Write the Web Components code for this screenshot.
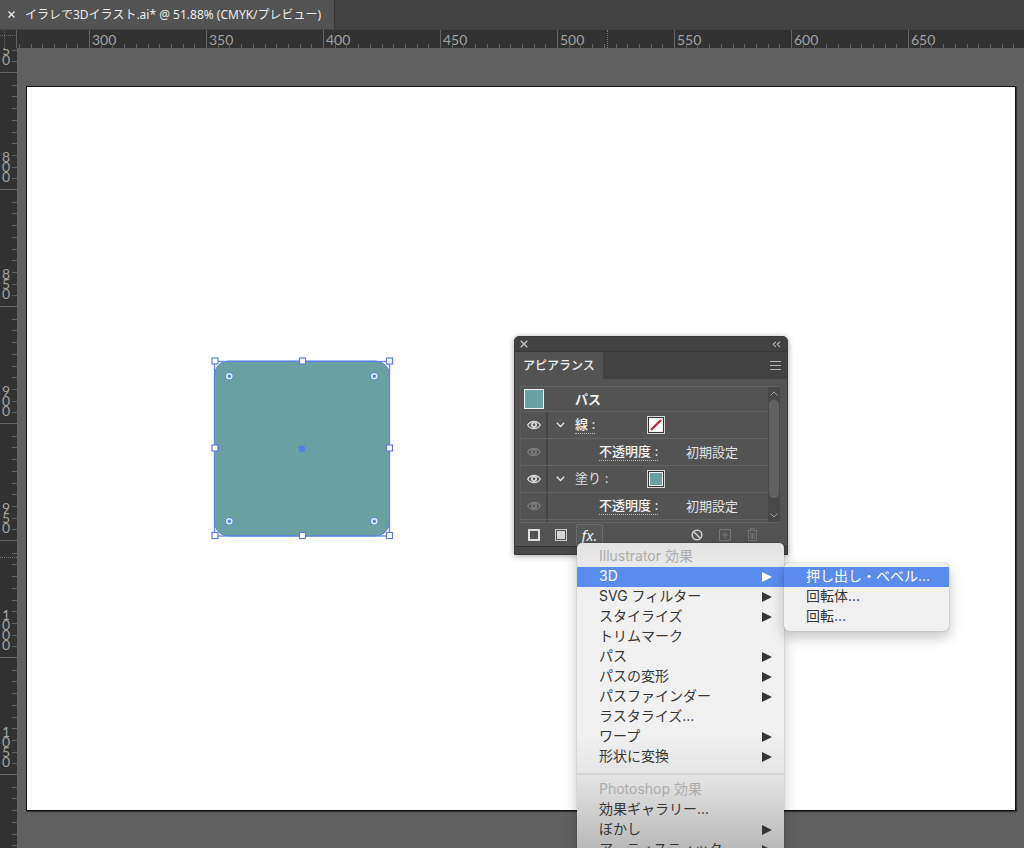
<!DOCTYPE html>
<html lang="ja">
<head>
<meta charset="utf-8">
<title>イラレで3Dイラスト.ai</title>
<style>
  html, body { margin: 0; height: 100%; overflow: hidden; background: #606060; }
  body { font: 13px/20px "Inter", "Noto Sans CJK JP", sans-serif; }
</style>
</head>
<body>
<design-app></design-app>
<script>
const SHEET = `
  * { box-sizing: border-box; }
  button { font: inherit; color: inherit; background: none; border: 0; padding: 0; margin: 0; }
  svg { display: block; }
`;

class BaseElement extends HTMLElement {
  connectedCallback() {
    if (this.shadowRoot) return;
    this.attachShadow({ mode: 'open' }).innerHTML = `<style>${SHEET}${this.styles()}</style>${this.markup()}`;
  }
  styles() { return ''; }
  markup() { return ''; }
}

/* Document tab strip */
customElements.define('document-tabs', class extends BaseElement {
  styles() { return `
    :host { display: flex; height: 30px; background: #424242; }
    .tab { display: flex; align-items: center; gap: 9px; height: 29px; padding: 0 13px 0 7px;
      background: #535353; border-right: 1px solid #383838; color: #ececec; white-space: nowrap;
      font: 12px/20px "Noto Sans", "Noto Sans CJK JP", sans-serif; }
    button { display: flex; width: 9px; height: 9px; align-items: center; justify-content: center; }
  `; }
  markup() { return `
    <div class="tab">
      <button aria-label="閉じる"><svg width="7" height="7" viewBox="0 0 7 7"><path d="M.5 .5l6 6M6.5 .5l-6 6" stroke="#e8e8e8" stroke-width="1.4"/></svg></button>
      <slot></slot>
    </div>`; }
});

/* Ruler: a lead-in segment that ends at the first major tick, then one segment per label */
customElements.define('canvas-ruler', class extends BaseElement {
  get vertical() { return this.getAttribute('axis') === 'y'; }
  styles() {
    const common = `
      :host { display: flex; position: relative; overflow: hidden; background: #323232; color: #a2a2a2;
        font: 14px/10px Lato, sans-serif; }
      .seg { display: flex; position: relative; flex: none; overflow: hidden; }
      svg { position: absolute; }
      .mark { position: absolute; }
    `;
    return common + (this.vertical ? `
      :host { flex-direction: column; width: 17px; }
      .seg { height: 117px; border-bottom: 1px solid #666; flex-direction: column; justify-content: flex-end; padding: 0 0 7px 2px; }
      .seg:first-of-type { height: 25px; }
      svg { right: 0; bottom: -1px; }
      .label { width: 9px; word-break: break-all; }
      .mark { left: 0; top: 509px; width: 17px; border-top: 1px dotted #777; }
    ` : `
      :host { height: 18px; flex: 1; }
      .seg { width: 117px; border-left: 1px solid #666; padding: 5px 0 0 2px; }
      .seg:first-of-type { width: 72px; border-left: 0; }
      svg { right: 0; bottom: 0; }
      .mark { left: 590px; top: 0; height: 18px; border-left: 1px dotted #777; }
    `);
  }
  markup() {
    let d = '';
    for (let i = 1; i < 10; i++) {
      const p = Math.round(i * 11.7) + .5;
      d += this.vertical ? `M0 ${p}h5` : `M${p} 0v4`;
    }
    const ticks = this.vertical
      ? `<svg width="5" height="117"><path d="${d}" stroke="#616161"/></svg>`
      : `<svg width="117" height="4"><path d="${d}" stroke="#616161"/></svg>`;
    const labels = this.getAttribute('labels').split(',');
    return labels.map(t => `<div class="seg"><div class="label">${t}</div>${ticks}</div>`).join('') + '<i class="mark"></i>';
  }
});

/* Rounded square with its bounding box and corner widgets */
customElements.define('selected-shape', class extends BaseElement {
  styles() { return ':host { display: block; }'; }
  markup() {
    const handles = [[5,5],[92.5,5],[179.5,5],[5,92],[179.5,92],[5,179.5],[92.5,179.5],[179.5,179.5]]
      .map(([x, y]) => `<rect x="${x - 3}" y="${y - 3}" width="6" height="6" fill="#fff" stroke="#5b7fe0" stroke-width="1.2"/>`).join('');
    const widgets = [[19.3,20.3],[164.3,20.3],[19.3,165.3],[164.3,165.3]]
      .map(([x, y]) => `<circle cx="${x}" cy="${y}" r="4" fill="#4f80e6"/><circle cx="${x}" cy="${y}" r="2.5" fill="none" stroke="#e2f0ff" stroke-width="1.6"/>`).join('');
    return `<svg width="185" height="185" viewBox="0 0 185 185">
      <rect x="4.5" y="5" width="175" height="175" rx="14" fill="#6ba0a2" stroke="#5c82dc" stroke-width="1"/>
      <rect x="4.5" y="5.5" width="175" height="174.5" fill="none" stroke="#5b86ea" stroke-width="1.3"/>
      ${handles}${widgets}<circle cx="91.8" cy="92.8" r="3.4" fill="#4f80ec"/></svg>`;
  }
});

/* One line of the appearance list */
customElements.define('appearance-row', class extends BaseElement {
  styles() { return `
    :host { display: flex; height: 27px; border-bottom: 1px solid #636363; }
    .eye { width: 27px; flex: none; border-right: 2px solid #454545; display: flex; align-items: center; justify-content: center; color: #d6d6d6; }
    :host([dim]) .eye { color: #7b7b7b; }
    .body { flex: 1; display: flex; align-items: center; }
    .fold { width: 24px; margin-right: 3px; display: flex; justify-content: center; }
    .name { width: 72px; display: flex; }
    :host([dim]) .body { padding-left: 51px; }
    :host([dim]) .name { width: 87px; }
    .name button { display: block; line-height: 17px; white-space: nowrap; color: #f4f4f4; font-weight: 500; }
    .link { border-bottom: 1px dotted #bbb; }
    :host([plain]) .link { border-bottom-color: transparent; }
    :host([plain]) .name button { color: #e0e0e0; font-weight: 400; }
  `; }
  markup() {
    const eye = `<svg width="14" height="10" viewBox="0 0 14 10"><path d="M.7 5C3.500 .3 10.500 .3 13.300 5C10.500 9.700 3.500 9.700 .7 5Z" fill="none" stroke="currentColor" stroke-width="1.400"/><circle cx="7" cy="4.800" r="2.200" fill="none" stroke="currentColor" stroke-width="1.800"/></svg>`;
    const fold = this.hasAttribute('dim') ? '' : `<button class="fold" aria-label="開閉"><svg width="9" height="6" viewBox="0 0 9 6"><path d="M.8 .8L4.500 4.500L8.200 .8" fill="none" stroke="#e4e4e4" stroke-width="1.300"/></svg></button>`;
    return `<button class="eye" aria-label="表示">${eye}</button><div class="body">${fold}<span class="name"><button class="link">${this.getAttribute('label')} :</button></span><slot></slot></div>`;
  }
});

customElements.define('color-swatch', class extends BaseElement {
  styles() { return `
    :host { display: block; width: 18px; height: 18px; }
    button { display: block; width: 100%; height: 100%; border: 1px solid #d8d8d8; padding: 1px; background: #333; }
    span { display: block; width: 14px; height: 14px; border: 1px solid #f4f4f4; background: #6ba0a2; }
    :host([kind=none]) span { background: #fff; }
    :host([kind=large]) { width: 20px; height: 20px; }
    :host([kind=large]) button { padding: 0; background: #6ba0a2; border-color: #f2f2f2; }
    :host([kind=large]) span { display: none; }
  `; }
  markup() {
    const slash = this.getAttribute('kind') === 'none'
      ? '<svg width="12" height="12"><path d="M1 11L11 1" stroke="#b5283f" stroke-width="2.400"/></svg>' : '';
    return `<button aria-label="カラー"><span>${slash}</span></button>`;
  }
});

/* Popup menu and its lines */
customElements.define('popup-menu', class extends BaseElement {
  styles() { return `
    :host { display: block; padding: 4px 0; border-radius: 5px; background: #f0f0f0; font-size: 14px;
      box-shadow: 0 0 1px rgba(0,0,0,.5), 0 6px 14px rgba(0,0,0,.24); }
    :host([shaded]) { background: linear-gradient(#e2e2e2 0, #eaeaea 24px, #f1f1f1 60px, #f1f1f1 190px, #e3e3e3 235px, #b9b9b9 305px); }
  `; }
  markup() { return '<div role="menu"><slot></slot></div>'; }
});

customElements.define('menu-line', class extends BaseElement {
  styles() { return `
    :host { display: block; }
    button, .head { display: flex; align-items: center; justify-content: space-between; width: 100%; height: 20px;
      padding: 0 12px 0 22px; white-space: nowrap; color: #363636; text-align: left; }
    span { align-self: flex-start; line-height: 18px; }
    .head { color: #acacac; }
    :host([active]) button { background: #5a8cee; color: #fff; }
    hr { margin: 6px 0 5px; border: 0; height: 2px; background: #d4d4d4; }
  `; }
  markup() {
    if (this.hasAttribute('separator')) return '<hr>';
    if (this.hasAttribute('heading')) return '<div class="head"><span><slot></slot></span></div>';
    const arrow = this.hasAttribute('more') ? '<svg width="10" height="10"><path d="M0 0L10 5L0 10Z" fill="currentColor"/></svg>' : '';
    return `<button role="menuitem"><span><slot></slot></span>${arrow}</button>`;
  }
});

/* Floating appearance panel */
customElements.define('appearance-panel', class extends BaseElement {
  styles() { return `
    :host { display: block; background: #535353; color: #e2e2e2; border: 1px solid #3a3a3a; border-radius: 5px 5px 0 0;
      box-shadow: 0 1px 6px rgba(0,0,0,.35); }
    .title { display: flex; align-items: center; justify-content: space-between; height: 15px; padding: 0 6px 0 5px;
      background: #424242; border-radius: 4px 4px 0 0; border-bottom: 1px solid #383838; }
    .tabs { display: flex; align-items: center; justify-content: space-between; height: 27px; padding-right: 6px; background: #424242; margin-bottom: 7px; }
    .tab { align-self: stretch; width: 88px; background: #535353; color: #f0f0f0; font-size: 12px; font-weight: 500; white-space: nowrap; }
    .list { display: flex; height: 137px; margin: 0 7px 0 5px; border: 1px solid #636363; border-width: 1px 0; overflow: hidden; }
    .rows { flex: 1; border-left: 1px solid #5b5b5b; }
    .rest { width: 27px; height: 27px; border-right: 2px solid #454545; }
    .object { display: flex; align-items: center; height: 25px; gap: 31px; padding-left: 3px; border-bottom: 1px solid #636363; font-weight: 700; color: #f0f0f0; }
    .scroll { width: 12px; background: #484848; display: flex; flex-direction: column; align-items: center; padding: 4px 0; gap: 4px; }
    .thumb { width: 10px; height: 98px; margin-bottom: auto; border-radius: 5px; background: #616161; }
    .foot { display: flex; align-items: center; height: 23px; padding: 0 24px 0 11px; }
    .foot button { display: flex; align-items: center; justify-content: center; height: 22px; }
    .foot .line { width: 15px; }
    .foot .fill { width: 40px; }
    .foot .fx { width: 27px; margin-left: -5px; border: 1px solid #6a6a6a; border-radius: 2px; background: #575757;
      color: #f0f0f0; font: italic 15px/20px "Noto Sans", sans-serif; }
    .foot .clear { width: 24px; }
    .foot .copy { width: 32px; }
    .foot .trash { width: 22px; }
    .foot .gap { flex: 1; }
    .base { height: 8px; background: #484848; border-top: 1px solid #333; }
    .menu { position: absolute; left: 62px; top: 206px; width: 207px; }
    .sub { position: absolute; left: 269px; top: 226px; width: 165px; }
  `; }
  markup() { return `
    <div class="title">
      <button aria-label="閉じる"><svg width="8" height="8"><path d="M.7 .7l6.600 6.600M7.300 .7l-6.600 6.600" stroke="#c8c8c8" stroke-width="1.300"/></svg></button>
      <button aria-label="折りたたむ"><svg width="9" height="7"><path d="M4 .8L1.200 3.300L4 5.800M8 .8L5.200 3.300L8 5.800" fill="none" stroke="#bdbdbd" stroke-width="1.100"/></svg></button>
    </div>
    <div class="tabs">
      <button class="tab">アピアランス</button>
      <button aria-label="パネルメニュー"><svg width="11" height="9"><path d="M0 .5h11M0 4.500h11M0 8.500h11" stroke="#b4b4b4"/></svg></button>
    </div>
    <div class="list">
      <div class="rows">
        <div class="object"><color-swatch kind="large"></color-swatch><span>パス</span></div>
        <appearance-row label="線"><color-swatch kind="none"></color-swatch></appearance-row>
        <appearance-row label="不透明度" dim>初期設定</appearance-row>
        <appearance-row label="塗り" plain><color-swatch></color-swatch></appearance-row>
        <appearance-row label="不透明度" dim>初期設定</appearance-row>
        <div class="rest"></div>
      </div>
      <div class="scroll">
        <svg width="8" height="5"><path d="M.5 4.500L4 1L7.500 4.500" fill="none" stroke="#a0a0a0"/></svg>
        <div class="thumb"></div>
        <svg width="8" height="5"><path d="M.5 .5L4 4L7.500 .5" fill="none" stroke="#a0a0a0"/></svg>
      </div>
    </div>
    <div class="foot">
      <button class="line" aria-label="新規線を追加"><svg width="12" height="12"><rect x="1" y="1" width="10" height="10" fill="none" stroke="#dedede" stroke-width="2"/></svg></button>
      <button class="fill" aria-label="新規塗りを追加"><svg width="12" height="12"><rect x=".5" y=".5" width="11" height="11" fill="none" stroke="#c8c8c8"/><rect x="2" y="2" width="8" height="8" fill="#d4d4d4"/></svg></button>
      <button class="fx" aria-label="新規効果を追加">fx.</button>
      <span class="gap"></span>
      <button class="clear" aria-label="アピアランスを消去"><svg width="12" height="12"><circle cx="6" cy="6" r="4.800" fill="none" stroke="#cecece" stroke-width="1.600"/><path d="M2.700 2.700L9.300 9.300" stroke="#cecece" stroke-width="1.600"/></svg></button>
      <button class="copy" aria-label="項目を複製"><svg width="12" height="12"><path d="M.5 .5h11v11h-11zM6 3v6M3 6h6" fill="none" stroke="#767676"/></svg></button>
      <button class="trash" aria-label="項目を削除"><svg width="11" height="13"><path d="M0 2.500h11M3.500 2V.5h4V2M1.500 3v9.500h8V3M4 5v6M5.500 5v6M7 5v6" fill="none" stroke="#707070"/></svg></button>
    </div>
    <div class="base"></div>
    <popup-menu class="menu" shaded>
      <menu-line heading>Illustrator 効果</menu-line>
      <menu-line more active>3D</menu-line>
      <menu-line more>SVG フィルター</menu-line>
      <menu-line more>スタイライズ</menu-line>
      <menu-line>トリムマーク</menu-line>
      <menu-line more>パス</menu-line>
      <menu-line more>パスの変形</menu-line>
      <menu-line more>パスファインダー</menu-line>
      <menu-line>ラスタライズ...</menu-line>
      <menu-line more>ワープ</menu-line>
      <menu-line more>形状に変換</menu-line>
      <menu-line separator></menu-line>
      <menu-line heading>Photoshop 効果</menu-line>
      <menu-line>効果ギャラリー...</menu-line>
      <menu-line more>ぼかし</menu-line>
      <menu-line more>アーティスティック</menu-line>
    </popup-menu>
    <popup-menu class="sub">
      <menu-line active>押し出し・ベベル...</menu-line>
      <menu-line>回転体...</menu-line>
      <menu-line>回転...</menu-line>
    </popup-menu>`; }
});

customElements.define('design-app', class extends BaseElement {
  styles() { return `
    :host { display: flex; flex-direction: column; height: 100vh; position: relative; overflow: hidden; }
    .top, .work { display: flex; }
    .work { flex: 1; min-height: 0; }
    .corner { width: 17px; background: #323232; border-right: 1px solid #606060; }
    .canvas { flex: 1; padding: 38px 8px 37px 9px; background: #606060; }
    .artboard { position: relative; height: 100%; background: #fff; border: 1px solid #111; box-shadow: 1px 1px 1px rgba(0,0,0,.45); }
    selected-shape { position: absolute; left: 183px; top: 269px; }
    appearance-panel { position: absolute; left: 487px; top: 249px; width: 274px; }
  `; }
  markup() { return `
    <document-tabs>イラレで3Dイラスト.ai* @ 51.88% (CMYK/プレビュー)</document-tabs>
    <div class="top">
      <div class="corner"><svg width="16" height="18"><path d="M0 5.500H16M4.500 0V18" stroke="#606060" stroke-dasharray="1 1"/></svg></div>
      <canvas-ruler axis="x" labels=",300,350,400,450,500,550,600,650"></canvas-ruler>
    </div>
    <div class="work">
      <canvas-ruler axis="y" labels="50,800,850,900,950,1000,1050,"></canvas-ruler>
      <main class="canvas"><div class="artboard"><selected-shape></selected-shape><appearance-panel></appearance-panel></div></main>
    </div>`; }
});
</script>
</body>
</html>
